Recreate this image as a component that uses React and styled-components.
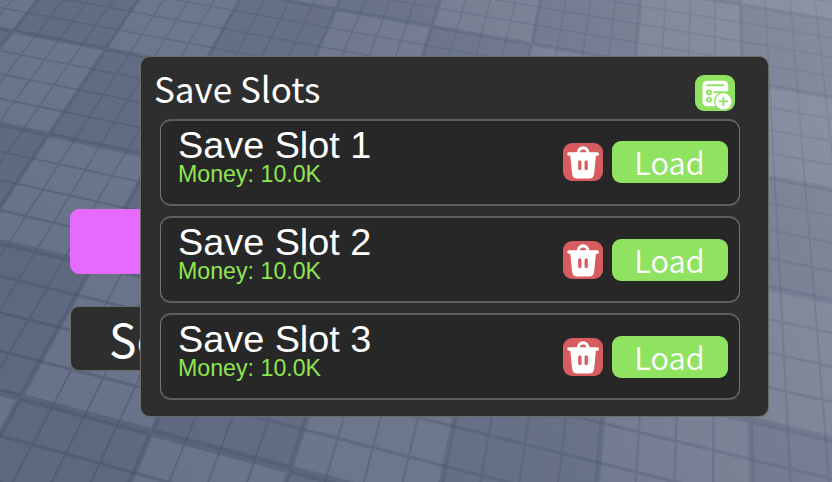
import React from "react";
import styled, { createGlobalStyle } from "styled-components";

const GlobalStyle = createGlobalStyle`
  body { margin: 0; background: #68728a; }
  * { box-sizing: border-box; }
`;

/* ---------- Baseplate floor, projected in perspective ---------- */

// Homography from (column, row) of the floor grid to screen pixels
const project = (u, v) => {
  const w = 1 - 0.0170096 * u - 0.0769424 * v;
  const x = (83.8061 * u - 55.3663 * v + 67.2903) / w;
  const y = (15.7391 * u + 67.1219 * v - 38.463) / w;
  return `${x.toFixed(1)} ${y.toFixed(1)}`;
};
const quad = (u0, v0, u1, v1) =>
  `M${project(u0, v0)}L${project(u1, v0)}L${project(u1, v1)}L${project(u0, v1)}Z`;

const U0 = -1, U1 = 9, V0 = -3, V1 = 5;
let darkTiles = "";
let majorLines = "";
let minorLines = "";
for (let u = U0; u < U1; u++)
  for (let v = V0; v < V1; v++) if ((u + v) % 2 === 0) darkTiles += quad(u, v, u + 1, v + 1);
for (let i = U0 * 4; i <= U1 * 4; i++) {
  const major = i % 4 === 0;
  const w = major ? 0.019 : 0.008;
  const d = quad(i / 4 - w, V0, i / 4 + w, V1);
  if (major) majorLines += d; else minorLines += d;
}
for (let i = V0 * 4; i <= V1 * 4; i++) {
  const major = i % 4 === 0;
  const w = major ? 0.025 : 0.01;
  const d = quad(U0, i / 4 - w, U1, i / 4 + w);
  if (major) majorLines += d; else minorLines += d;
}

const FloorSvg = styled.svg`
  position: absolute;
  inset: 0;
  width: 100%;
  height: 100%;
`;

const Floor = () => (
  <FloorSvg viewBox="0 0 832 482" aria-hidden="true">
    <defs>
      <linearGradient id="haze" gradientUnits="userSpaceOnUse" x1="100" y1="400" x2="860" y2="0">
        <stop offset="0" stopColor="#687389" />
        <stop offset="0.45" stopColor="#70798e" />
        <stop offset="1" stopColor="#8f95a6" />
      </linearGradient>
      <linearGradient id="ink" gradientUnits="userSpaceOnUse" x1="60" y1="400" x2="840" y2="0">
        <stop offset="0" stopColor="#465169" />
        <stop offset="0.5" stopColor="#4c5770" stopOpacity="0.8" />
        <stop offset="1" stopColor="#5d667d" stopOpacity="0.45" />
      </linearGradient>
    </defs>
    <rect width="832" height="482" fill="url(#haze)" />
    <path d={darkTiles} fill="url(#ink)" opacity="0.31" />
    <path d={minorLines} fill="url(#ink)" opacity="0.45" />
    <path d={majorLines} fill="url(#ink)" opacity="0.46" />
  </FloorSvg>
);

/* ---------- Layout ---------- */

const Screen = styled.main`
  position: relative;
  width: 832px;
  height: 482px;
  overflow: hidden;
  font-family: "Noto Sans CJK JP", "Noto Sans", sans-serif;
  color: #fff;
`;

const SideMenu = styled.nav`
  position: relative;
  display: flex;
  flex-direction: column;
  gap: 32px;
  width: 220px;
  padding: 209px 0 0 70px;
`;

const MenuButton = styled.button`
  height: 65px;
  padding: 0 0 0 38px;
  border: 1px solid ${(p) => (p.$accent ? "#e76aff" : "#6b6a6a")};
  border-radius: 9px;
  background: ${(p) => (p.$accent ? "#e76aff" : "#2e2e2e")};
  color: #fff;
  font: 400 46px/58px "Noto Sans CJK JP", sans-serif;
  text-align: left;
  white-space: nowrap;
  span { display: block; margin-top: -2px; }
`;

const Panel = styled.section`
  position: absolute;
  left: 140px;
  top: 56px;
  width: 629px;
  height: 361px;
  padding: 0 28px 0 19px;
  border: 1px solid #6a6a69;
  border-radius: 10px;
  background: #2e2e2e;
`;

const Header = styled.header`
  display: flex;
  justify-content: space-between;
  height: 62px;
  padding: 18px 5px 0 0;
`;

const Title = styled.h1`
  margin: -8px 0 0 -6px;
  font-size: 35px;
  font-weight: 400;
  line-height: 42px;
`;

const IconButton = styled.button`
  display: block;
  width: 40px;
  height: ${(p) => p.$height}px;
  padding: 0;
  border: 0;
  border-radius: 9px;
  background: ${(p) => p.$color};
  svg { display: block; width: 100%; height: 100%; }
`;

const SlotList = styled.div`
  display: flex;
  flex-direction: column;
  gap: 10px;
`;

const Slot = styled.article`
  display: flex;
  justify-content: space-between;
  height: 87px;
  padding: 0 11px 0 17px;
  border: 1px solid #747474;
  border-top: 2px solid #5e5e5e;
  border-bottom: 2px solid #5e5e5e;
  border-radius: 11px;
  background: #272727;
`;

const SlotInfo = styled.div`
  font-family: "Liberation Sans", Arial, sans-serif;
  white-space: nowrap;
`;

const SlotName = styled.h2`
  margin: 3px 0 0;
  font-size: 37.8px;
  font-weight: 400;
  line-height: 42px;
`;

const Money = styled.p`
  margin: -5px 0 0;
  color: #8ee550;
  font-size: 23.2px;
  line-height: 27px;
`;

const Actions = styled.div`
  display: flex;
  align-items: center;
  gap: 9px;
  height: ${(p) => (p.$first ? 81 : 83)}px;
`;

const LoadButton = styled.button`
  width: 116px;
  height: 42px;
  padding: 0;
  border: 0;
  border-radius: 9px;
  background: #8fe361;
  color: #fff;
  font: 350 30.8px/42px "Noto Sans CJK JP", sans-serif;
  span { display: block; margin-right: 1px; }
`;

const TrashIcon = () => (
  <svg viewBox="0 0 40 38">
    <path d="M15.3 11V9.9a4.8 5 0 0 1 9.6 0V11" fill="none" stroke="#fff" strokeWidth="3.2" />
    <rect x="4.2" y="9.2" width="31.8" height="3.6" rx="1.7" fill="#fff" />
    <path d="M7.2 12h25.8l-1.9 19q-.6 4.5-4.8 4.5H14q-4.2 0-4.8-4.5Z" fill="#fff" />
    <path d="M16.8 18.9v6.6M23.2 18.9v6.6" stroke="#d65c60" strokeWidth="3.3" strokeLinecap="round" />
  </svg>
);

const AddListIcon = () => (
  <svg viewBox="0 0 40 36">
    <rect x="7.5" y="5.7" width="25.7" height="25.5" rx="4.5" fill="#fff" />
    <g fill="none" stroke="#8fe361" strokeLinecap="round">
      <path d="M12.2 10.3h16M19.5 17.2h14" strokeWidth="1.9" />
      <circle cx="14" cy="17.5" r="2" strokeWidth="1.9" />
      <circle cx="14" cy="24.6" r="2" strokeWidth="1.9" />
    </g>
    <circle cx="28.4" cy="26.4" r="9.5" fill="#8fe361" />
    <circle cx="28.4" cy="26.4" r="8.1" fill="#fff" />
    <path d="M24.4 26.4h8M28.4 22.4v8" stroke="#8fe361" strokeWidth="1.8" strokeLinecap="round" />
  </svg>
);

const SLOTS = [
  { name: "Save Slot 1", money: "10.0K" },
  { name: "Save Slot 2", money: "10.0K" },
  { name: "Save Slot 3", money: "10.0K" },
];

export default function App() {
  return (
    <Screen>
      <GlobalStyle />
      <Floor />
      <SideMenu>
        <MenuButton $accent aria-label="Menu" />
        <MenuButton><span>Se</span></MenuButton>
      </SideMenu>
      <Panel>
        <Header>
          <Title>Save Slots</Title>
          <IconButton $color="#8fe361" $height={36} aria-label="New save slot">
            <AddListIcon />
          </IconButton>
        </Header>
        <SlotList>
          {SLOTS.map((slot, i) => (
            <Slot key={slot.name}>
              <SlotInfo>
                <SlotName>{slot.name}</SlotName>
                <Money>Money: {slot.money}</Money>
              </SlotInfo>
              <Actions $first={i === 0}>
                <IconButton $color="#d65c60" $height={38} aria-label={`Delete ${slot.name}`}>
                  <TrashIcon />
                </IconButton>
                <LoadButton><span>Load</span></LoadButton>
              </Actions>
            </Slot>
          ))}
        </SlotList>
      </Panel>
    </Screen>
  );
}
